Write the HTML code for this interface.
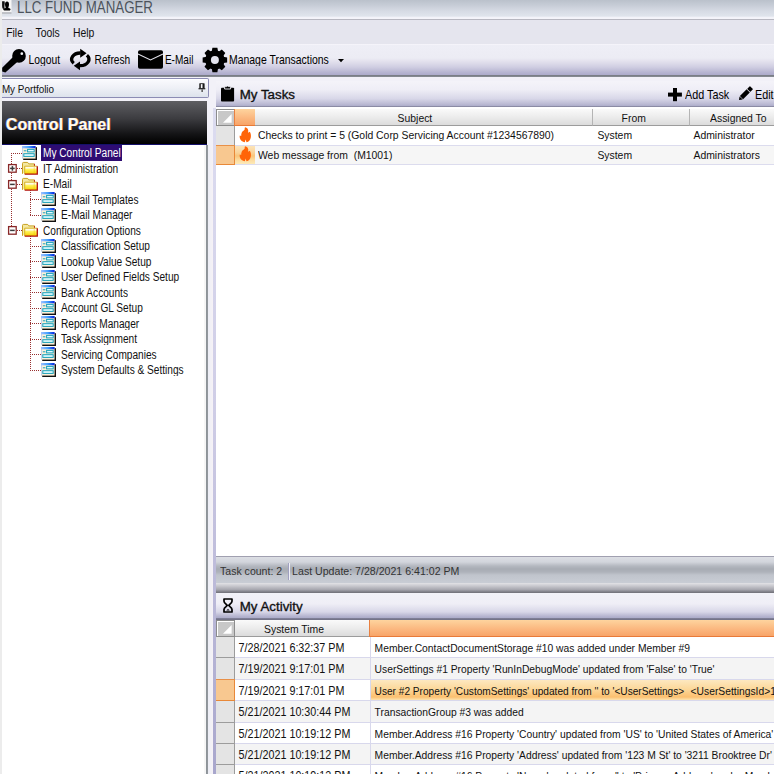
<!DOCTYPE html><html><head><meta charset="utf-8"><style>
*{margin:0;padding:0;box-sizing:border-box}
html,body{width:774px;height:774px;overflow:hidden;background:#fff}
body{font-family:"Liberation Sans",sans-serif;position:relative}
.a{position:absolute}
.t{position:absolute;white-space:nowrap;line-height:0;height:0;transform-origin:0 0}
.t::before{content:"";}
svg{position:absolute;overflow:visible}
</style></head><body>
<div class="a " style="left:0px;top:0px;width:774px;height:21px;background:linear-gradient(#bac1cb 0,#c6ccd6 5px,#d6dbe4 11px,#dfe4ec 16px,#f4f4fa 17.6px,#f4f4fa 18.6px,#b0b0ba 19.6px,#c8c8d2 20.4px,#e6e6ee 21px)"></div>
<svg style="left:2px;top:0" width="10" height="14" viewBox="0 0 10 14"><rect x="0" y="0" width="9.5" height="12.3" fill="#f6f6f6"/><rect x="0" y="12.3" width="9.5" height="1.4" fill="#b4b6ba"/><path d="M0.1 1.2 H2.6 Q3 3 2.5 5.5 Q2.2 7.5 2.8 8.6 L1 9 Q0.1 8 0.1 6 Z" fill="#111"/><ellipse cx="5.0" cy="4.4" rx="2.0" ry="2.9" fill="#000"/><path d="M3.6 6.6 H6.4 V7.9 Q8.6 8.3 8.6 9.4 Q8.6 10.6 5.6 10.6 Q1.2 10.6 1.2 9.4 Q1.2 8.3 3.6 7.9 Z" fill="#000"/></svg>
<div class="t" style="left:17px;top:7.67px;font-size:13.3px;color:#4c535c;font-weight:normal;transform:scaleY(1.199);">LLC FUND MANAGER</div>
<div class="a " style="left:0px;top:20px;width:774px;height:24px;background:#e5e5ee"></div>
<div class="t" style="left:6.2px;top:32.90px;font-size:10.4px;color:#111;font-weight:normal;transform:scaleY(1.171);">File</div>
<div class="t" style="left:35.5px;top:32.90px;font-size:10.4px;color:#111;font-weight:normal;transform:scaleY(1.171);">Tools</div>
<div class="t" style="left:73px;top:32.90px;font-size:10.4px;color:#111;font-weight:normal;transform:scaleY(1.171);">Help</div>
<div class="a " style="left:0px;top:43.7px;width:774px;height:33.3px;background:linear-gradient(#f8f6fc 0,#eeeef6 1.5px,#ececf4 14px,#e4e2ee 17px,#d0cee2 23px,#b8b6d2 28px,#aeaccc 30.5px,#7c8088 31.4px,#6c7078 32.3px,#e8eaf6 33.3px)"></div>
<div class="a " style="left:0px;top:0px;width:2px;height:774px;background:#ececec"></div>
<svg style="left:2px;top:48px" width="26" height="26" viewBox="0 0 26 26"><circle cx="17" cy="7.9" r="6.8" fill="#000"/><circle cx="19.8" cy="5.7" r="1.35" fill="#f4f4f8"/><path d="M11 9 L0.2 19.8 L0.2 23.6 L3.4 24.6 L15.8 13.4 Z" fill="#000"/></svg>
<div class="t" style="left:28.5px;top:59.75px;font-size:10.3px;color:#000;font-weight:normal;transform:scaleY(1.196);">Logout</div>
<svg style="left:66px;top:45px" width="30" height="30" viewBox="0 0 30 30"><path d="M7.71 18.35 A8.6 6.3 0 0 1 14.6 8.0" fill="none" stroke="#000" stroke-width="3.3"/><path d="M14.2 3.8 L20.6 8.3 L14.2 12.7 Z" fill="#000"/><path d="M20.89 10.25 A8.6 6.3 0 0 1 14.0 20.6" fill="none" stroke="#000" stroke-width="3.3"/><path d="M14.0 16.6 L7.8 20.8 L14.0 25.2 Z" fill="#000"/></svg>
<div class="t" style="left:94.6px;top:59.75px;font-size:10.2px;color:#000;font-weight:normal;transform:scaleY(1.208);">Refresh</div>
<svg style="left:138.4px;top:50.3px" width="25" height="19" viewBox="0 0 24.6 18.4"><rect x="0" y="0" width="24.6" height="18.4" rx="1.8" fill="#000"/><path d="M0 3.9 L12.3 9.6 L24.6 3.9" fill="none" stroke="#e4e4ec" stroke-width="1.1"/></svg>
<div class="t" style="left:164.9px;top:59.75px;font-size:10.05px;color:#000;font-weight:normal;transform:scaleY(1.226);">E-Mail</div>
<svg style="left:201.6px;top:47px" width="26" height="26" viewBox="0 0 26 26"><path d="M9.73 4.48 L10.42 0.65 L15.38 0.65 L16.07 4.48 L16.61 4.70 L19.81 2.48 L23.32 5.99 L21.10 9.19 L21.32 9.73 L25.15 10.42 L25.15 15.38 L21.32 16.07 L21.10 16.61 L23.32 19.81 L19.81 23.32 L16.61 21.10 L16.07 21.32 L15.38 25.15 L10.42 25.15 L9.73 21.32 L9.19 21.10 L5.99 23.32 L2.48 19.81 L4.70 16.61 L4.48 16.07 L0.65 15.38 L0.65 10.42 L4.48 9.73 L4.70 9.19 L2.48 5.99 L5.99 2.48 L9.19 4.70 Z" fill="#000"/><circle cx="12.9" cy="12.9" r="9.7" fill="#000"/><circle cx="12.9" cy="12.9" r="4.0" fill="#e4e4ee"/></svg>
<div class="t" style="left:229px;top:59.75px;font-size:10.45px;color:#000;font-weight:normal;transform:scaleY(1.179);">Manage Transactions</div>
<svg style="left:337.5px;top:59.3px" width="6" height="4" viewBox="0 0 6 4"><path d="M0 0 L6 0 L3 3.3 Z" fill="#000"/></svg>
<div class="a " style="left:2px;top:76.5px;width:772px;height:700px;background:#f2f1f8"></div>
<div class="a " style="left:2px;top:78px;width:207px;height:20px;background:linear-gradient(#fbfbfe,#eef0f6 50%,#dde3ec);border:1.3px solid #8c8cb4;border-left:none;border-radius:0 2px 2px 0;box-shadow:inset 0 1px 0 #fff"></div>
<div class="t" style="left:1.9px;top:89.06px;font-size:9.9px;color:#111;font-weight:normal;transform:scaleY(1.186);">My Portfolio</div>
<svg style="left:199px;top:83px" width="7" height="9" viewBox="0 0 7 9"><rect x="0.3" y="0.2" width="5.3" height="5.3" rx="0.6" fill="#1a1a1a"/><rect x="1.8" y="1.1" width="1.7" height="4.2" fill="#f6f6fa"/><rect x="-0.5" y="5.2" width="6.8" height="1.1" fill="#111"/><rect x="2.4" y="6.3" width="1.5" height="2.7" fill="#555"/></svg>
<div class="a " style="left:2px;top:101px;width:205px;height:43.5px;background:linear-gradient(#5e5e62,#3c3c40 40%,#141416 75%,#000 97%,#14106a 97%,#14106a)"></div>
<div class="t" style="left:5.8px;top:124.06px;font-size:16.15px;color:#fffaf0;font-weight:bold;transform:scaleY(1.059);text-shadow:0.6px 0 0 #c07020,-0.5px 0 0 #6080ff">Control Panel</div>
<div class="a " style="left:2px;top:144.5px;width:204px;height:630px;background:#fff"></div>
<div class="a " style="left:204px;top:144.5px;width:2px;height:700px;background:#f6f6f6"></div>
<div class="a " style="left:205.8px;top:144.5px;width:2px;height:700px;background:linear-gradient(90deg,#9aa0a6,#7c8288 60%,#b8bcc0)"></div>
<div class="a " style="left:207.8px;top:144.5px;width:5.4px;height:700px;background:linear-gradient(90deg,#eceef6,#f6f2f6)"></div>
<div class="a " style="left:213.2px;top:108px;width:2.8px;height:666px;background:linear-gradient(#dcdcf0,#cfcde6 45%,#a8a6cc)"></div>
<svg width="0" height="0" style="position:absolute"><defs><linearGradient id="gb" x1="0" x2="1"><stop offset="0" stop-color="#a0c0ff"/><stop offset="0.5" stop-color="#40a0ff"/><stop offset="1" stop-color="#0020e0"/></linearGradient><linearGradient id="gy" x1="0" y1="0" x2="0" y2="1"><stop offset="0" stop-color="#fffce0"/><stop offset="0.45" stop-color="#fff050"/><stop offset="1" stop-color="#f4d000"/></linearGradient></defs></svg>
<div class="a" style="left:11.4px;top:153.0px;width:1px;height:77.4px;background:repeating-linear-gradient(#983030 0 1px,transparent 1px 2px)"></div>
<div class="a" style="left:30px;top:189.96px;width:1px;height:24.960000000000008px;background:repeating-linear-gradient(#983030 0 1px,transparent 1px 2px)"></div>
<div class="a" style="left:30px;top:236.4px;width:1px;height:133.32000000000002px;background:repeating-linear-gradient(#983030 0 1px,transparent 1px 2px)"></div>
<div class="a" style="left:11.4px;top:153.0px;width:10.6px;height:1px;background:repeating-linear-gradient(90deg,#983030 0 1px,transparent 1px 2px)"></div>
<svg style="left:22px;top:146.0px" width="15" height="14" viewBox="0 0 15 14"><rect x="1.2" y="1.2" width="13.8" height="12.8" fill="#111"/><rect x="0" y="0" width="13.6" height="12.6" fill="#fcf0d8"/><rect x="0" y="0" width="0.9" height="12.6" fill="#c0d0f0"/><rect x="0" y="0" width="13.6" height="2.3" fill="url(#gb)"/><rect x="1.8" y="4.3" width="2.6" height="1" fill="#18a0c0"/><rect x="5.6" y="3.4" width="6.6" height="2.5" fill="#e4fbff" stroke="#18a0b8" stroke-width="1"/><rect x="1.8" y="7.7" width="10.4" height="2.7" fill="#e4fbff" stroke="#18a0b8" stroke-width="1"/></svg>
<div class="a " style="left:41px;top:144.6px;width:81px;height:16.1px;background:#2e0c72"></div>
<div class="t" style="left:43px;top:153.40px;font-size:10.15px;color:#fff;font-weight:normal;transform:scaleY(1.171);">My Control Panel</div>
<div class="a" style="left:11.4px;top:168.48px;width:10.6px;height:1px;background:repeating-linear-gradient(90deg,#983030 0 1px,transparent 1px 2px)"></div>
<svg style="left:21.8px;top:162.07999999999998px" width="16" height="13" viewBox="0 0 16 13"><path d="M0.5 11.8 V1.4 Q0.5 0.4 1.6 0.4 H5.2 Q6 0.4 6.4 1.2 L6.7 1.9 H12.4 V4.6" fill="#f4e8a0" stroke="#c8a020" stroke-width="1"/><rect x="12.1" y="1.9" width="0.9" height="2.6" fill="#c02020"/><rect x="2.7" y="4.2" width="12.6" height="7.9" fill="url(#gy)"/><rect x="3.4" y="4.9" width="11.2" height="1.6" fill="#fffce8"/><path d="M2.7 12.1 V4.2 H15.3" fill="none" stroke="#d4ac18" stroke-width="0.9"/><path d="M15.3 4.2 V12.1 H2.7" fill="none" stroke="#b01010" stroke-width="1.3"/><rect x="11.8" y="5" width="0.7" height="6.5" fill="#f0c000" opacity="0.6"/></svg>
<svg style="left:8px;top:164.17999999999998px" width="9" height="9" viewBox="0 0 9 9"><rect x="0.6" y="0.6" width="7.6" height="7.6" fill="#fff" stroke="#882828" stroke-width="1.3"/><rect x="2.1" y="3.65" width="4.6" height="1.5" fill="#3a3a3a"/><rect x="3.65" y="2.1" width="1.5" height="4.6" fill="#3a3a3a"/></svg>
<div class="t" style="left:43px;top:168.88px;font-size:10.15px;color:#111;font-weight:normal;transform:scaleY(1.171);">IT Administration</div>
<div class="a" style="left:11.4px;top:183.96px;width:10.6px;height:1px;background:repeating-linear-gradient(90deg,#983030 0 1px,transparent 1px 2px)"></div>
<svg style="left:21.8px;top:177.56px" width="16" height="13" viewBox="0 0 16 13"><path d="M0.5 11.8 V1.4 Q0.5 0.4 1.6 0.4 H5.2 Q6 0.4 6.4 1.2 L6.7 1.9 H12.4 V4.6" fill="#f4e8a0" stroke="#c8a020" stroke-width="1"/><rect x="12.1" y="1.9" width="0.9" height="2.6" fill="#c02020"/><rect x="2.7" y="4.2" width="12.6" height="7.9" fill="url(#gy)"/><rect x="3.4" y="4.9" width="11.2" height="1.6" fill="#fffce8"/><path d="M2.7 12.1 V4.2 H15.3" fill="none" stroke="#d4ac18" stroke-width="0.9"/><path d="M15.3 4.2 V12.1 H2.7" fill="none" stroke="#b01010" stroke-width="1.3"/><rect x="11.8" y="5" width="0.7" height="6.5" fill="#f0c000" opacity="0.6"/></svg>
<svg style="left:8px;top:179.66px" width="9" height="9" viewBox="0 0 9 9"><rect x="0.6" y="0.6" width="7.6" height="7.6" fill="#fff" stroke="#882828" stroke-width="1.3"/><rect x="2.1" y="3.65" width="4.6" height="1.5" fill="#3a3a3a"/></svg>
<div class="t" style="left:43px;top:184.36px;font-size:10.15px;color:#111;font-weight:normal;transform:scaleY(1.171);">E-Mail</div>
<div class="a" style="left:30px;top:199.44px;width:11px;height:1px;background:repeating-linear-gradient(90deg,#983030 0 1px,transparent 1px 2px)"></div>
<svg style="left:41px;top:192.44px" width="15" height="14" viewBox="0 0 15 14"><rect x="1.2" y="1.2" width="13.8" height="12.8" fill="#111"/><rect x="0" y="0" width="13.6" height="12.6" fill="#fcf0d8"/><rect x="0" y="0" width="0.9" height="12.6" fill="#c0d0f0"/><rect x="0" y="0" width="13.6" height="2.3" fill="url(#gb)"/><rect x="1.8" y="4.3" width="2.6" height="1" fill="#18a0c0"/><rect x="5.6" y="3.4" width="6.6" height="2.5" fill="#e4fbff" stroke="#18a0b8" stroke-width="1"/><rect x="1.8" y="7.7" width="10.4" height="2.7" fill="#e4fbff" stroke="#18a0b8" stroke-width="1"/></svg>
<div class="t" style="left:61px;top:199.84px;font-size:10.15px;color:#111;font-weight:normal;transform:scaleY(1.171);">E-Mail Templates</div>
<div class="a" style="left:30px;top:214.92000000000002px;width:11px;height:1px;background:repeating-linear-gradient(90deg,#983030 0 1px,transparent 1px 2px)"></div>
<svg style="left:41px;top:207.92000000000002px" width="15" height="14" viewBox="0 0 15 14"><rect x="1.2" y="1.2" width="13.8" height="12.8" fill="#111"/><rect x="0" y="0" width="13.6" height="12.6" fill="#fcf0d8"/><rect x="0" y="0" width="0.9" height="12.6" fill="#c0d0f0"/><rect x="0" y="0" width="13.6" height="2.3" fill="url(#gb)"/><rect x="1.8" y="4.3" width="2.6" height="1" fill="#18a0c0"/><rect x="5.6" y="3.4" width="6.6" height="2.5" fill="#e4fbff" stroke="#18a0b8" stroke-width="1"/><rect x="1.8" y="7.7" width="10.4" height="2.7" fill="#e4fbff" stroke="#18a0b8" stroke-width="1"/></svg>
<div class="t" style="left:61px;top:215.32px;font-size:10.15px;color:#111;font-weight:normal;transform:scaleY(1.171);">E-Mail Manager</div>
<div class="a" style="left:11.4px;top:230.4px;width:10.6px;height:1px;background:repeating-linear-gradient(90deg,#983030 0 1px,transparent 1px 2px)"></div>
<svg style="left:21.8px;top:224.0px" width="16" height="13" viewBox="0 0 16 13"><path d="M0.5 11.8 V1.4 Q0.5 0.4 1.6 0.4 H5.2 Q6 0.4 6.4 1.2 L6.7 1.9 H12.4 V4.6" fill="#f4e8a0" stroke="#c8a020" stroke-width="1"/><rect x="12.1" y="1.9" width="0.9" height="2.6" fill="#c02020"/><rect x="2.7" y="4.2" width="12.6" height="7.9" fill="url(#gy)"/><rect x="3.4" y="4.9" width="11.2" height="1.6" fill="#fffce8"/><path d="M2.7 12.1 V4.2 H15.3" fill="none" stroke="#d4ac18" stroke-width="0.9"/><path d="M15.3 4.2 V12.1 H2.7" fill="none" stroke="#b01010" stroke-width="1.3"/><rect x="11.8" y="5" width="0.7" height="6.5" fill="#f0c000" opacity="0.6"/></svg>
<svg style="left:8px;top:226.1px" width="9" height="9" viewBox="0 0 9 9"><rect x="0.6" y="0.6" width="7.6" height="7.6" fill="#fff" stroke="#882828" stroke-width="1.3"/><rect x="2.1" y="3.65" width="4.6" height="1.5" fill="#3a3a3a"/></svg>
<div class="t" style="left:43px;top:230.80px;font-size:10.15px;color:#111;font-weight:normal;transform:scaleY(1.171);">Configuration Options</div>
<div class="a" style="left:30px;top:245.88px;width:11px;height:1px;background:repeating-linear-gradient(90deg,#983030 0 1px,transparent 1px 2px)"></div>
<svg style="left:41px;top:238.88px" width="15" height="14" viewBox="0 0 15 14"><rect x="1.2" y="1.2" width="13.8" height="12.8" fill="#111"/><rect x="0" y="0" width="13.6" height="12.6" fill="#fcf0d8"/><rect x="0" y="0" width="0.9" height="12.6" fill="#c0d0f0"/><rect x="0" y="0" width="13.6" height="2.3" fill="url(#gb)"/><rect x="1.8" y="4.3" width="2.6" height="1" fill="#18a0c0"/><rect x="5.6" y="3.4" width="6.6" height="2.5" fill="#e4fbff" stroke="#18a0b8" stroke-width="1"/><rect x="1.8" y="7.7" width="10.4" height="2.7" fill="#e4fbff" stroke="#18a0b8" stroke-width="1"/></svg>
<div class="t" style="left:61px;top:246.28px;font-size:10.15px;color:#111;font-weight:normal;transform:scaleY(1.171);">Classification Setup</div>
<div class="a" style="left:30px;top:261.36px;width:11px;height:1px;background:repeating-linear-gradient(90deg,#983030 0 1px,transparent 1px 2px)"></div>
<svg style="left:41px;top:254.36px" width="15" height="14" viewBox="0 0 15 14"><rect x="1.2" y="1.2" width="13.8" height="12.8" fill="#111"/><rect x="0" y="0" width="13.6" height="12.6" fill="#fcf0d8"/><rect x="0" y="0" width="0.9" height="12.6" fill="#c0d0f0"/><rect x="0" y="0" width="13.6" height="2.3" fill="url(#gb)"/><rect x="1.8" y="4.3" width="2.6" height="1" fill="#18a0c0"/><rect x="5.6" y="3.4" width="6.6" height="2.5" fill="#e4fbff" stroke="#18a0b8" stroke-width="1"/><rect x="1.8" y="7.7" width="10.4" height="2.7" fill="#e4fbff" stroke="#18a0b8" stroke-width="1"/></svg>
<div class="t" style="left:61px;top:261.76px;font-size:10.15px;color:#111;font-weight:normal;transform:scaleY(1.171);">Lookup Value Setup</div>
<div class="a" style="left:30px;top:276.84000000000003px;width:11px;height:1px;background:repeating-linear-gradient(90deg,#983030 0 1px,transparent 1px 2px)"></div>
<svg style="left:41px;top:269.84000000000003px" width="15" height="14" viewBox="0 0 15 14"><rect x="1.2" y="1.2" width="13.8" height="12.8" fill="#111"/><rect x="0" y="0" width="13.6" height="12.6" fill="#fcf0d8"/><rect x="0" y="0" width="0.9" height="12.6" fill="#c0d0f0"/><rect x="0" y="0" width="13.6" height="2.3" fill="url(#gb)"/><rect x="1.8" y="4.3" width="2.6" height="1" fill="#18a0c0"/><rect x="5.6" y="3.4" width="6.6" height="2.5" fill="#e4fbff" stroke="#18a0b8" stroke-width="1"/><rect x="1.8" y="7.7" width="10.4" height="2.7" fill="#e4fbff" stroke="#18a0b8" stroke-width="1"/></svg>
<div class="t" style="left:61px;top:277.24px;font-size:10.15px;color:#111;font-weight:normal;transform:scaleY(1.171);">User Defined Fields Setup</div>
<div class="a" style="left:30px;top:292.32px;width:11px;height:1px;background:repeating-linear-gradient(90deg,#983030 0 1px,transparent 1px 2px)"></div>
<svg style="left:41px;top:285.32px" width="15" height="14" viewBox="0 0 15 14"><rect x="1.2" y="1.2" width="13.8" height="12.8" fill="#111"/><rect x="0" y="0" width="13.6" height="12.6" fill="#fcf0d8"/><rect x="0" y="0" width="0.9" height="12.6" fill="#c0d0f0"/><rect x="0" y="0" width="13.6" height="2.3" fill="url(#gb)"/><rect x="1.8" y="4.3" width="2.6" height="1" fill="#18a0c0"/><rect x="5.6" y="3.4" width="6.6" height="2.5" fill="#e4fbff" stroke="#18a0b8" stroke-width="1"/><rect x="1.8" y="7.7" width="10.4" height="2.7" fill="#e4fbff" stroke="#18a0b8" stroke-width="1"/></svg>
<div class="t" style="left:61px;top:292.72px;font-size:10.15px;color:#111;font-weight:normal;transform:scaleY(1.171);">Bank Accounts</div>
<div class="a" style="left:30px;top:307.8px;width:11px;height:1px;background:repeating-linear-gradient(90deg,#983030 0 1px,transparent 1px 2px)"></div>
<svg style="left:41px;top:300.8px" width="15" height="14" viewBox="0 0 15 14"><rect x="1.2" y="1.2" width="13.8" height="12.8" fill="#111"/><rect x="0" y="0" width="13.6" height="12.6" fill="#fcf0d8"/><rect x="0" y="0" width="0.9" height="12.6" fill="#c0d0f0"/><rect x="0" y="0" width="13.6" height="2.3" fill="url(#gb)"/><rect x="1.8" y="4.3" width="2.6" height="1" fill="#18a0c0"/><rect x="5.6" y="3.4" width="6.6" height="2.5" fill="#e4fbff" stroke="#18a0b8" stroke-width="1"/><rect x="1.8" y="7.7" width="10.4" height="2.7" fill="#e4fbff" stroke="#18a0b8" stroke-width="1"/></svg>
<div class="t" style="left:61px;top:308.20px;font-size:10.15px;color:#111;font-weight:normal;transform:scaleY(1.171);">Account GL Setup</div>
<div class="a" style="left:30px;top:323.28px;width:11px;height:1px;background:repeating-linear-gradient(90deg,#983030 0 1px,transparent 1px 2px)"></div>
<svg style="left:41px;top:316.28px" width="15" height="14" viewBox="0 0 15 14"><rect x="1.2" y="1.2" width="13.8" height="12.8" fill="#111"/><rect x="0" y="0" width="13.6" height="12.6" fill="#fcf0d8"/><rect x="0" y="0" width="0.9" height="12.6" fill="#c0d0f0"/><rect x="0" y="0" width="13.6" height="2.3" fill="url(#gb)"/><rect x="1.8" y="4.3" width="2.6" height="1" fill="#18a0c0"/><rect x="5.6" y="3.4" width="6.6" height="2.5" fill="#e4fbff" stroke="#18a0b8" stroke-width="1"/><rect x="1.8" y="7.7" width="10.4" height="2.7" fill="#e4fbff" stroke="#18a0b8" stroke-width="1"/></svg>
<div class="t" style="left:61px;top:323.68px;font-size:10.15px;color:#111;font-weight:normal;transform:scaleY(1.171);">Reports Manager</div>
<div class="a" style="left:30px;top:338.76px;width:11px;height:1px;background:repeating-linear-gradient(90deg,#983030 0 1px,transparent 1px 2px)"></div>
<svg style="left:41px;top:331.76px" width="15" height="14" viewBox="0 0 15 14"><rect x="1.2" y="1.2" width="13.8" height="12.8" fill="#111"/><rect x="0" y="0" width="13.6" height="12.6" fill="#fcf0d8"/><rect x="0" y="0" width="0.9" height="12.6" fill="#c0d0f0"/><rect x="0" y="0" width="13.6" height="2.3" fill="url(#gb)"/><rect x="1.8" y="4.3" width="2.6" height="1" fill="#18a0c0"/><rect x="5.6" y="3.4" width="6.6" height="2.5" fill="#e4fbff" stroke="#18a0b8" stroke-width="1"/><rect x="1.8" y="7.7" width="10.4" height="2.7" fill="#e4fbff" stroke="#18a0b8" stroke-width="1"/></svg>
<div class="t" style="left:61px;top:339.16px;font-size:10.15px;color:#111;font-weight:normal;transform:scaleY(1.171);">Task Assignment</div>
<div class="a" style="left:30px;top:354.24px;width:11px;height:1px;background:repeating-linear-gradient(90deg,#983030 0 1px,transparent 1px 2px)"></div>
<svg style="left:41px;top:347.24px" width="15" height="14" viewBox="0 0 15 14"><rect x="1.2" y="1.2" width="13.8" height="12.8" fill="#111"/><rect x="0" y="0" width="13.6" height="12.6" fill="#fcf0d8"/><rect x="0" y="0" width="0.9" height="12.6" fill="#c0d0f0"/><rect x="0" y="0" width="13.6" height="2.3" fill="url(#gb)"/><rect x="1.8" y="4.3" width="2.6" height="1" fill="#18a0c0"/><rect x="5.6" y="3.4" width="6.6" height="2.5" fill="#e4fbff" stroke="#18a0b8" stroke-width="1"/><rect x="1.8" y="7.7" width="10.4" height="2.7" fill="#e4fbff" stroke="#18a0b8" stroke-width="1"/></svg>
<div class="t" style="left:61px;top:354.64px;font-size:10.15px;color:#111;font-weight:normal;transform:scaleY(1.171);">Servicing Companies</div>
<div class="a" style="left:30px;top:369.72px;width:11px;height:1px;background:repeating-linear-gradient(90deg,#983030 0 1px,transparent 1px 2px)"></div>
<svg style="left:41px;top:362.72px" width="15" height="14" viewBox="0 0 15 14"><rect x="1.2" y="1.2" width="13.8" height="12.8" fill="#111"/><rect x="0" y="0" width="13.6" height="12.6" fill="#fcf0d8"/><rect x="0" y="0" width="0.9" height="12.6" fill="#c0d0f0"/><rect x="0" y="0" width="13.6" height="2.3" fill="url(#gb)"/><rect x="1.8" y="4.3" width="2.6" height="1" fill="#18a0c0"/><rect x="5.6" y="3.4" width="6.6" height="2.5" fill="#e4fbff" stroke="#18a0b8" stroke-width="1"/><rect x="1.8" y="7.7" width="10.4" height="2.7" fill="#e4fbff" stroke="#18a0b8" stroke-width="1"/></svg>
<div class="t" style="left:61px;top:370.12px;font-size:10.15px;color:#111;font-weight:normal;transform:scaleY(1.171);">System Defaults & Settings</div>
<div class="a " style="left:216px;top:77px;width:558px;height:30.5px;background:linear-gradient(#f7f6fb 0,#efeef6 40%,#d8d7e8 70%,#b6b5d0 90%,#acacca 94%,#74748a 96%,#74748a 98%,#fff 98%)"></div>
<div class="a " style="left:216px;top:77px;width:558px;height:4px;background:#f2f1f8"></div>
<svg style="left:221px;top:85.3px" width="14" height="17" viewBox="0 0 14 17"><rect x="0" y="2.7" width="13.1" height="13.8" rx="0.9" fill="#000"/><path d="M3.6 4 V2.6 Q3.6 1.6 4.6 1.6 H5.6 Q6.6 0.2 7.6 1.6 H8.6 Q9.6 1.6 9.6 2.6 V4 Z" fill="#000" stroke="#f4f4fa" stroke-width="0.9"/></svg>
<div class="t" style="left:239.8px;top:95.25px;font-size:13.3px;color:#111;font-weight:normal;transform:scaleY(0.948);-webkit-text-stroke:0.35px #111">My Tasks</div>
<svg style="left:668.3px;top:87.6px" width="14" height="14" viewBox="0 0 14 14"><rect x="5" y="0" width="4" height="13.2" fill="#000"/><rect x="0" y="4.6" width="13.9" height="4" fill="#000"/></svg>
<div class="t" style="left:685px;top:94.05px;font-size:10.8px;color:#000;font-weight:normal;transform:scaleY(1.141);">Add Task</div>
<svg style="left:737.5px;top:87.4px" width="16" height="15" viewBox="0 0 16 15"><g transform="translate(1,13.1) rotate(-45)"><path d="M0 0 L3 -2.25 L3 2.25 Z" fill="#000"/><rect x="3.5" y="-2.25" width="9.5" height="4.5" fill="#000"/><rect x="13.7" y="-2.25" width="4" height="4.5" rx="0.6" fill="#000"/></g></svg>
<div class="t" style="left:755px;top:94.05px;font-size:10.8px;color:#000;font-weight:normal;transform:scaleY(1.141);">Edit</div>
<div class="a " style="left:216px;top:107.5px;width:558px;height:449px;background:#fff"></div>
<div class="a " style="left:216px;top:108.6px;width:18.6px;height:17.5px;background:#c8c8c8;border:1px solid #8c8c8c;box-shadow:inset 1px 1px 0 #fff"></div>
<svg style="left:223px;top:114.19999999999999px" width="9" height="9" viewBox="0 0 9 9"><path d="M8.6 0 L8.6 8.8 L0 8.8 Z" fill="#fff"/></svg>
<div class="a " style="left:234.2px;top:108.6px;width:20.8px;height:17.5px;background:linear-gradient(#fed49e,#fbb880 55%,#f8a468);border-bottom:1.6px solid #e87a38;border-left:1px solid #e88040"></div>
<div class="a " style="left:255px;top:108.6px;width:338.3px;height:17.5px;background:linear-gradient(#fafafa,#ececec 50%,#dcdcdc);border-bottom:1px solid #9c9c9c;border-right:1px solid #b4b4b4"></div>
<div class="a " style="left:593.3px;top:108.6px;width:96.9px;height:17.5px;background:linear-gradient(#fafafa,#ececec 50%,#dcdcdc);border-bottom:1px solid #9c9c9c;border-right:1px solid #b4b4b4"></div>
<div class="a " style="left:690.2px;top:108.6px;width:100px;height:17.5px;background:linear-gradient(#fafafa,#ececec 50%,#dcdcdc);border-bottom:1px solid #9c9c9c;border-right:1px solid #b4b4b4"></div>
<div class="t" style="left:397.6px;top:118.76px;font-size:10.4px;color:#111;font-weight:normal;transform:scaleY(1.101);">Subject</div>
<div class="t" style="left:621.6px;top:118.76px;font-size:10.4px;color:#111;font-weight:normal;transform:scaleY(1.101);">From</div>
<div class="t" style="left:710px;top:118.76px;font-size:10.4px;color:#111;font-weight:normal;transform:scaleY(1.101);">Assigned To</div>
<div class="a " style="left:234.6px;top:126.0px;width:540px;height:19.5px;background:#fff;border-bottom:1px solid #dcdcee"></div>
<div class="a " style="left:216px;top:126.0px;width:18.6px;height:19.5px;background:#e4e4e4;border-right:1px solid #9c9c9c;border-bottom:1px solid #9c9c9c"></div>
<svg style="left:238.8px;top:126.9px" width="13" height="16" viewBox="0 0 13 16"><path d="M6.3 0.3 C7.6 0.6 9.2 1.8 9.3 3.8 L9.0 5.8 L10.8 4.8 C11.8 6.5 12.2 8.5 11.8 10.5 C11.3 13 9.8 14.8 7.5 15.2 L6.6 12.6 L5.8 15.3 C3.5 15 1.5 13.5 0.8 11 C0.5 10 0.6 9 0.8 8.4 L2.2 9.0 C2.0 6.5 3.2 4.5 4.8 3.6 C5.6 3.0 6.0 2.0 5.6 1.0 Z" fill="#ff6408"/></svg>
<div class="t" style="left:258px;top:136.06px;font-size:10.4px;color:#111;font-weight:normal;transform:scaleY(1.101);">Checks to print = 5 (Gold Corp Servicing Account #1234567890)</div>
<div class="t" style="left:597.4px;top:136.06px;font-size:10.4px;color:#111;font-weight:normal;transform:scaleY(1.101);">System</div>
<div class="t" style="left:693.5px;top:136.06px;font-size:10.4px;color:#111;font-weight:normal;transform:scaleY(1.101);">Administrator</div>
<div class="a " style="left:234.6px;top:145.5px;width:540px;height:19.5px;background:#f6f6f6;border-bottom:1px solid #dcdcee"></div>
<div class="a " style="left:216px;top:144.5px;width:18.6px;height:20.5px;background:#f8c890;border-right:1.5px solid #e88838;border-bottom:1.2px solid #e88838;border-top:1px solid #e89048"></div>
<div class="a " style="left:234.6px;top:145.5px;width:20.4px;height:18.5px;background:linear-gradient(#fce4b8,#fad49c 35%,#f9c47a 55%,#fcdca0 78%,#fdeab8)"></div>
<svg style="left:238.8px;top:146.4px" width="13" height="16" viewBox="0 0 13 16"><path d="M6.3 0.3 C7.6 0.6 9.2 1.8 9.3 3.8 L9.0 5.8 L10.8 4.8 C11.8 6.5 12.2 8.5 11.8 10.5 C11.3 13 9.8 14.8 7.5 15.2 L6.6 12.6 L5.8 15.3 C3.5 15 1.5 13.5 0.8 11 C0.5 10 0.6 9 0.8 8.4 L2.2 9.0 C2.0 6.5 3.2 4.5 4.8 3.6 C5.6 3.0 6.0 2.0 5.6 1.0 Z" fill="#ff6408"/></svg>
<div class="t" style="left:258px;top:155.56px;font-size:10.4px;color:#111;font-weight:normal;transform:scaleY(1.101);">Web message from&nbsp; (M1001)</div>
<div class="t" style="left:597.4px;top:155.56px;font-size:10.4px;color:#111;font-weight:normal;transform:scaleY(1.101);">System</div>
<div class="t" style="left:693.5px;top:155.56px;font-size:10.4px;color:#111;font-weight:normal;transform:scaleY(1.101);">Administrators</div>
<div class="a " style="left:216px;top:556.2px;width:558px;height:26.6px;background:linear-gradient(#a0a0b0 0,#a0a0b0 1px,#dcdee4 1px,#d2d5dc 6px,#b4b8c0 10px,#a8acb4 13px,#aeb2ba 16px,#c0c4cc 19px,#c8ccd4 26.6px)"></div>
<div class="t" style="left:220px;top:570.96px;font-size:10.55px;color:#333;font-weight:normal;transform:scaleY(1.113);">Task count: 2</div>
<div class="a " style="left:288px;top:563px;width:1.2px;height:16.5px;background:#a0a0c0;box-shadow:1px 0 0 #f0f0f8"></div>
<div class="t" style="left:292.1px;top:570.96px;font-size:10.6px;color:#333;font-weight:normal;transform:scaleY(1.107);">Last Update: 7/28/2021 6:41:02 PM</div>
<div class="a " style="left:216px;top:582.8px;width:558px;height:10.2px;background:linear-gradient(#e2e2e6,#c8c8ce 30%,#a8a8b0 65%,#7c7c84 90%,#707078)"></div>
<div class="a " style="left:216px;top:593px;width:558px;height:26.7px;background:linear-gradient(#f2f2f8 0,#efeef6 40%,#d8d7e8 70%,#b6b5d0 86%,#acacca 92%,#74748a 95%,#74748a 100%)"></div>
<svg style="left:223px;top:597.8px" width="10" height="15" viewBox="0 0 10 15"><path d="M1 1 H9 V3.2 Q9 4.6 7 6.2 L5.8 7.4 L7 8.6 Q9 10.2 9 11.6 V14 H1 V11.6 Q1 10.2 3 8.6 L4.2 7.4 L3 6.2 Q1 4.6 1 3.2 Z" fill="none" stroke="#000" stroke-width="1.7" stroke-linejoin="round"/><path d="M3.2 12.6 L5 11 L6.8 12.6 Z" fill="#000"/></svg>
<div class="t" style="left:239.8px;top:606.85px;font-size:13.3px;color:#111;font-weight:normal;transform:scaleY(0.926);-webkit-text-stroke:0.35px #111">My Activity</div>
<div class="a " style="left:216px;top:619.7px;width:558px;height:160px;background:#fff"></div>
<div class="a " style="left:216px;top:619.7px;width:18.6px;height:17.3px;background:#c8c8c8;border:1px solid #8c8c8c;box-shadow:inset 1px 1px 0 #fff"></div>
<svg style="left:223px;top:625.3000000000001px" width="9" height="9" viewBox="0 0 9 9"><path d="M8.6 0 L8.6 8.8 L0 8.8 Z" fill="#fff"/></svg>
<div class="a " style="left:234.6px;top:619.7px;width:135.4px;height:17.3px;background:linear-gradient(#fafafa,#ececec 50%,#dcdcdc);border-bottom:1px solid #9c9c9c;border-right:1px solid #b4b4b4"></div>
<div class="a " style="left:369.4px;top:619.7px;width:420px;height:17.3px;background:linear-gradient(#fed49e,#fbb880 55%,#f8a468);border-bottom:1.6px solid #e87a38;border-left:1px solid #e88040"></div>
<div class="t" style="left:264px;top:629.81px;font-size:10.4px;color:#111;font-weight:normal;transform:scaleY(1.115);">System Time</div>
<div class="a " style="left:234.6px;top:637px;width:540px;height:21px;background:#fff;border-bottom:1px solid #d8d8ec"></div>
<div class="a " style="left:369.5px;top:637px;width:1px;height:21px;background:#d8d8ec"></div>
<div class="a " style="left:216px;top:637px;width:18.6px;height:21px;background:#e4e4e4;border-right:1px solid #9c9c9c;border-bottom:1px solid #9c9c9c"></div>
<div class="t" style="left:238.6px;top:646.75px;font-size:10.75px;color:#111;font-weight:normal;transform:scaleY(1.146);">7/28/2021 6:32:37 PM</div>
<div class="t" style="left:374.6px;top:649.06px;font-size:10.3px;color:#111;font-weight:normal;transform:scaleY(1.140);">Member.ContactDocumentStorage #10 was added under Member #9</div>
<div class="a " style="left:234.6px;top:658px;width:540px;height:22px;background:#f4f4f4;border-bottom:1px solid #d8d8ec"></div>
<div class="a " style="left:369.5px;top:658px;width:1px;height:22px;background:#d8d8ec"></div>
<div class="a " style="left:216px;top:658px;width:18.6px;height:22px;background:#e4e4e4;border-right:1px solid #9c9c9c;border-bottom:1px solid #9c9c9c"></div>
<div class="t" style="left:238.6px;top:667.75px;font-size:10.75px;color:#111;font-weight:normal;transform:scaleY(1.146);">7/19/2021 9:17:01 PM</div>
<div class="t" style="left:374.6px;top:670.06px;font-size:10.3px;color:#111;font-weight:normal;transform:scaleY(1.140);">UserSettings #1 Property 'RunInDebugMode' updated from 'False' to 'True'</div>
<div class="a " style="left:234.6px;top:680px;width:540px;height:21px;background:#fff;border-bottom:1px solid #d8d8ec"></div>
<div class="a " style="left:369.5px;top:680px;width:1px;height:21px;background:#d8d8ec"></div>
<div class="a " style="left:216px;top:679px;width:18.6px;height:22px;background:#f8c890;border-right:1.5px solid #e88838;border-bottom:1.5px solid #e88838;border-top:1px solid #e89048"></div>
<div class="a " style="left:370.5px;top:680px;width:404px;height:20px;background:linear-gradient(#fde8c0,#fcd89a 45%,#fcc070 85%,#fde4b0)"></div>
<div class="t" style="left:238.6px;top:689.75px;font-size:10.75px;color:#111;font-weight:normal;transform:scaleY(1.146);">7/19/2021 9:17:01 PM</div>
<div class="t" style="left:374.6px;top:692.06px;font-size:10.15px;color:#111;font-weight:normal;transform:scaleY(1.157);">User #2 Property 'CustomSettings' updated from '' to '&lt;UserSettings&gt;</div>
<div class="t" style="left:690.6px;top:692.06px;font-size:10.3px;color:#111;font-weight:normal;transform:scaleY(1.140);">&lt;UserSettingsId&gt;1&lt;/UserSettingsId&gt;</div>
<div class="a " style="left:234.6px;top:701px;width:540px;height:22px;background:#f4f4f4;border-bottom:1px solid #d8d8ec"></div>
<div class="a " style="left:369.5px;top:701px;width:1px;height:22px;background:#d8d8ec"></div>
<div class="a " style="left:216px;top:701px;width:18.6px;height:22px;background:#e4e4e4;border-right:1px solid #9c9c9c;border-bottom:1px solid #9c9c9c"></div>
<div class="t" style="left:238.6px;top:710.75px;font-size:10.75px;color:#111;font-weight:normal;transform:scaleY(1.146);">5/21/2021 10:30:44 PM</div>
<div class="t" style="left:374.6px;top:713.06px;font-size:10.3px;color:#111;font-weight:normal;transform:scaleY(1.140);">TransactionGroup #3 was added</div>
<div class="a " style="left:234.6px;top:723px;width:540px;height:21px;background:#fff;border-bottom:1px solid #d8d8ec"></div>
<div class="a " style="left:369.5px;top:723px;width:1px;height:21px;background:#d8d8ec"></div>
<div class="a " style="left:216px;top:723px;width:18.6px;height:21px;background:#e4e4e4;border-right:1px solid #9c9c9c;border-bottom:1px solid #9c9c9c"></div>
<div class="t" style="left:238.6px;top:732.75px;font-size:10.75px;color:#111;font-weight:normal;transform:scaleY(1.146);">5/21/2021 10:19:12 PM</div>
<div class="t" style="left:374.6px;top:735.06px;font-size:10.3px;color:#111;font-weight:normal;transform:scaleY(1.140);">Member.Address #16 Property 'Country' updated from 'US' to 'United States of America'</div>
<div class="a " style="left:234.6px;top:744px;width:540px;height:21px;background:#f4f4f4;border-bottom:1px solid #d8d8ec"></div>
<div class="a " style="left:369.5px;top:744px;width:1px;height:21px;background:#d8d8ec"></div>
<div class="a " style="left:216px;top:744px;width:18.6px;height:21px;background:#e4e4e4;border-right:1px solid #9c9c9c;border-bottom:1px solid #9c9c9c"></div>
<div class="t" style="left:238.6px;top:753.75px;font-size:10.75px;color:#111;font-weight:normal;transform:scaleY(1.146);">5/21/2021 10:19:12 PM</div>
<div class="t" style="left:374.6px;top:756.06px;font-size:10.3px;color:#111;font-weight:normal;transform:scaleY(1.140);">Member.Address #16 Property 'Address' updated from '123 M St' to '3211 Brooktree Dr'</div>
<div class="a " style="left:234.6px;top:765px;width:540px;height:22px;background:#fff;border-bottom:1px solid #d8d8ec"></div>
<div class="a " style="left:369.5px;top:765px;width:1px;height:22px;background:#d8d8ec"></div>
<div class="a " style="left:216px;top:765px;width:18.6px;height:22px;background:#e4e4e4;border-right:1px solid #9c9c9c;border-bottom:1px solid #9c9c9c"></div>
<div class="t" style="left:238.6px;top:774.75px;font-size:10.75px;color:#111;font-weight:normal;transform:scaleY(1.146);">5/21/2021 10:19:12 PM</div>
<div class="t" style="left:374.6px;top:777.06px;font-size:10.3px;color:#111;font-weight:normal;transform:scaleY(1.140);">Member.Address #16 Property 'Name' updated from '' to 'Primary Address' under Member #9</div>
</body></html>
